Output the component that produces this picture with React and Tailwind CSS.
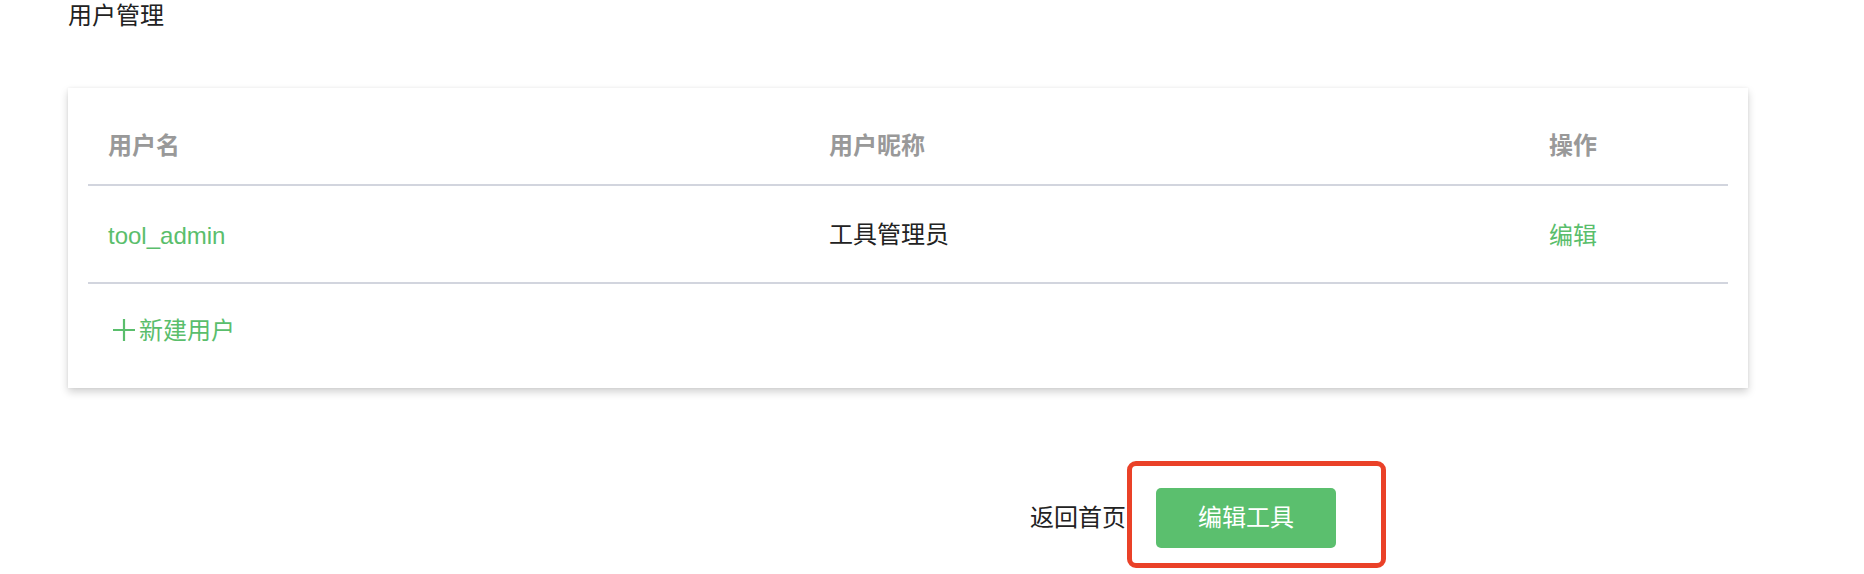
import React from "react";

const font = { fontFamily: '"Liberation Sans", "Noto Sans CJK SC", sans-serif' };

function PlusIcon() {
  return (
    <svg width="22" height="22" viewBox="0 0 22 22" className="ml-[5px] shrink-0">
      <path d="M11 0V22M0 11H22" stroke="#5abe6c" strokeWidth="2.2" fill="none" />
    </svg>
  );
}

export default function App() {
  return (
    <div className="w-[1864px] h-[574px] bg-white text-[24px] text-[#222]" style={font}>
      <div className="pl-[68px] h-[32px] leading-[32px]">用户管理</div>

      <div className="ml-[68px] mt-[56px] w-[1680px] bg-white pt-[20px] pb-[12px] px-[20px] shadow-[0_4px_8px_rgba(0,0,0,0.18),0_0_3px_rgba(0,0,0,0.06)]">
        <div className="grid grid-cols-[721px_720px_1fr] h-[78px] items-center border-b-2 border-[#d2d5de] font-bold text-[#999]">
          <div className="pl-[20px]">用户名</div>
          <div className="pl-[20px]">用户昵称</div>
          <div className="pl-[20px]">操作</div>
        </div>
        <div className="grid grid-cols-[721px_720px_1fr] h-[98px] items-center border-b-2 border-[#d2d5de]">
          <div className="pl-[20px] text-[#5abe6c] mt-[4px]">tool_admin</div>
          <div className="pl-[20px] text-[#222] mt-[1px]">工具管理员</div>
          <div className="pl-[20px] text-[#5abe6c] mt-[3px]">编辑</div>
        </div>
        <div className="flex items-center h-[92px] pl-[20px] text-[#5abe6c]">
          <PlusIcon />
          <span className="ml-[4px] leading-[32px] mt-[2px]">新建用户</span>
        </div>
      </div>

      <div className="flex items-start mt-[73px] pl-[1030px]">
        <span className="mt-[41px] leading-[32px] text-[#222]">返回首页</span>
        <div className="ml-[1px] border-[5px] border-[#ea4128] rounded-[9px] pl-[24px] pr-[45px] pt-[22px] pb-[15px]">
          <button className="w-[180px] h-[60px] rounded-[5px] bg-[#5bbf6e] text-white text-[24px] leading-[60px] text-center">
            编辑工具
          </button>
        </div>
      </div>
    </div>
  );
}
